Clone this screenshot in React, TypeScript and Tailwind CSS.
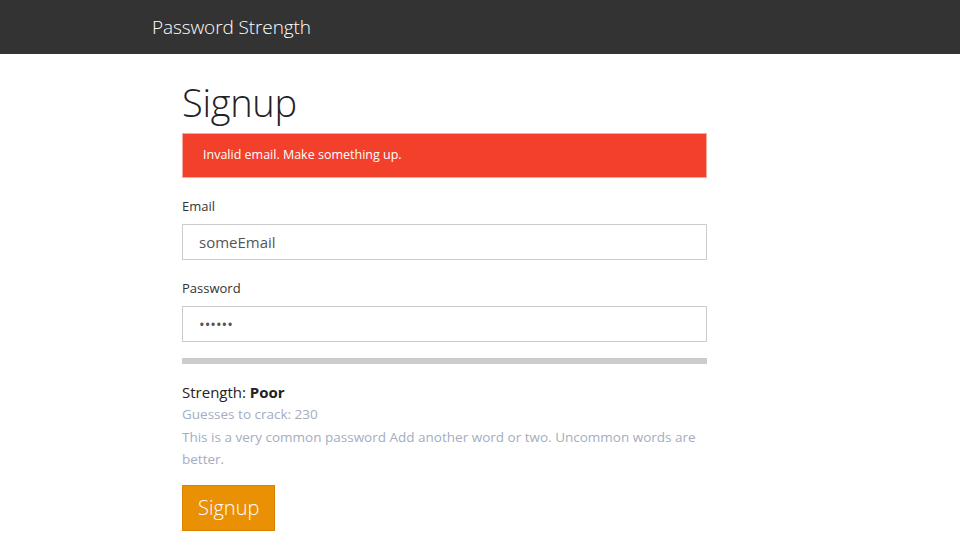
export default function App() {
  return (
    <div className="min-h-[540px] bg-white font-['Open_Sans',sans-serif] text-[#222]">
      <nav className="h-[54px] bg-[#333333] flex items-center pl-[152px]">
        <span className="text-white text-[19px] font-light tracking-[-0.1px]">Password Strength</span>
      </nav>

      <main className="w-[525px] ml-[182px]">
        <h1 className="mt-[27px] text-[38px] leading-[42px] font-light text-[#222] tracking-[-0.3px]">Signup</h1>

        <div className="mt-[10px] h-[45px] flex items-center px-5 bg-[#f2402a] border border-[#f5a89c] text-white text-[12.5px]">
          Invalid email. Make something up.
        </div>

        <form className="mt-[18px]" onSubmit={e => e.preventDefault()}>
          <label className="block text-[13px] leading-[20px] text-[#333]">Email</label>
          <input
            type="text"
            defaultValue="someEmail"
            className="mt-[8px] block w-full h-[36px] border border-[#cccccc] px-4 text-[15px] text-[#555] outline-none"
          />

          <label className="block mt-[18px] text-[13px] leading-[20px] text-[#333]">Password</label>
          <input
            type="password"
            defaultValue="123456"
            className="mt-[8px] block w-full h-[36px] border border-[#cccccc] px-4 text-[15px] text-[#555] outline-none"
          />

          <div className="mt-[16px] h-[6px] bg-[#cccccc]" />

          <div className="mt-[17px] text-[15px] leading-[22px] text-[#222]">
            Strength: <span className="font-bold">Poor</span>
          </div>
          <div className="text-[13.5px] leading-[22.5px] text-[#a4adbf]">
            <p>Guesses to crack: 230</p>
            <p>This is a very common password Add another word or two. Uncommon words are better.</p>
          </div>

          <button
            type="submit"
            className="mt-[14px] h-[46px] px-[15px] bg-[#ea9005] border border-[#d98200] text-white text-[20px] font-light"
          >
            Signup
          </button>
        </form>
      </main>
    </div>
  )
}
